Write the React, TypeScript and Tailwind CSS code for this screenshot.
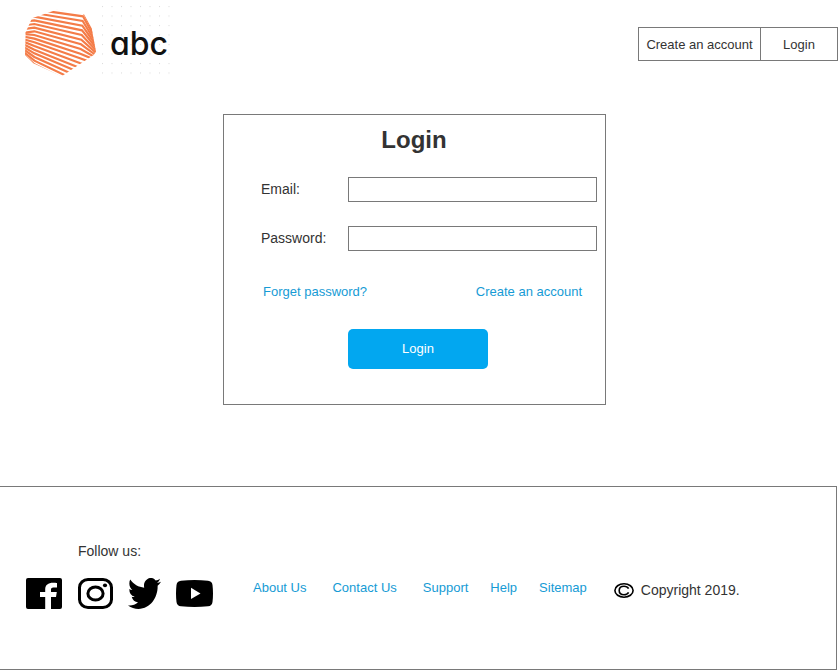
import React from "react";

const stripes = Array.from({ length: 20 }, (_, i) => {
  const a = 2 + i * 11;
  const b = a + 18 + i * 3;
  const c = b + Math.max(18, 84 - i * 7);
  const l = a < 80 ? a + 4 : a - (a - 80) * 0.28;
  return `M28 ${l} L58 ${a} L${205 - i} ${b} L246 ${c}`;
});

function Logo() {
  return (
    <svg width="176" height="86" viewBox="0 0 176 86" role="img" aria-label="abc" className="block shrink-0">
      <defs>
        <clipPath id="gem">
          <path d="M125 14 L207 28 L230 70 L243 140 L236 150 L140 214 L55 175 L30 150 L32 82 L51 40 Z" />
        </clipPath>
        <pattern id="dots" x="102" y="5" width="9.500" height="9.500" patternUnits="userSpaceOnUse">
          <rect x="0" y="1" width="1" height="1" fill="#d9d9d9" />
        </pattern>
      </defs>
      <rect x="102" y="5" width="70" height="77" fill="url(#dots)" />
      <g transform="translate(15 5) scale(0.3333)" clipPath="url(#gem)" fill="none" stroke="#f47c48" strokeWidth="6.500">
        {stripes.map((d) => (
          <path key={d} d={d} />
        ))}
      </g>
      <text x="110" y="55" fill="#111111" className="font-['Inter',sans-serif] text-[32px] font-medium [font-feature-settings:'cv11'_1]">
        abc
      </text>
    </svg>
  );
}

function Field({ id, label, type }: { id: string; label: string; type: string }) {
  return (
    <div className="flex items-center">
      <label htmlFor={id} className="w-[87px] shrink-0 pb-0.5 text-sm">
        {label}
      </label>
      <input id={id} type={type} className="h-[25px] min-w-0 flex-1 border border-[#797979] bg-white px-1 text-sm outline-none" />
    </div>
  );
}

function Social() {
  return (
    <div className="flex items-center">
      <a href="#facebook" aria-label="Facebook">
        <svg width="36" height="31" viewBox="0 0 36 31" className="block">
          <path d="M2 0H34a2 2 0 0 1 2 2V29a2 2 0 0 1-2 2H25V19h5l.8-5H25v-2.500c0-1.300.8-2 2.400-2H31V5C30 4.800 28.800 4.700 27 4.700c-4.800 0-7.800 2.200-7.800 6.500V14H14v5h5.200V31H2a2 2 0 0 1-2-2V2A2 2 0 0 1 2 0Z" />
        </svg>
      </a>
      <a href="#instagram" aria-label="Instagram" className="ml-4">
        <svg width="35" height="31" viewBox="0 0 35 31" className="block" fill="none" stroke="#000">
          <rect x="1.500" y="1.500" width="32" height="28" rx="8.500" ry="8" strokeWidth="3" />
          <ellipse cx="17.500" cy="15.500" rx="7.600" ry="6.600" strokeWidth="3" />
          <ellipse cx="27" cy="7.400" rx="2.100" ry="1.800" fill="#000" stroke="none" />
        </svg>
      </a>
      <a href="#twitter" aria-label="Twitter" className="ml-[15px]">
        <svg width="33" height="31" viewBox="0 2.200 24 19.600" preserveAspectRatio="none" className="block">
          <path d="M23.953 4.570a10 10 0 01-2.825.775 4.958 4.958 0 002.163-2.723c-.951.555-2.005.959-3.127 1.184a4.920 4.920 0 00-8.384 4.482C7.690 8.095 4.067 6.130 1.640 3.162a4.822 4.822 0 00-.666 2.475c0 1.710.870 3.213 2.188 4.096a4.904 4.904 0 01-2.228-.616v.060a4.923 4.923 0 003.946 4.827 4.996 4.996 0 01-2.212.085 4.936 4.936 0 004.604 3.417 9.867 9.867 0 01-6.102 2.105c-.390 0-.779-.023-1.170-.067a13.995 13.995 0 007.557 2.209c9.053 0 13.998-7.496 13.998-13.985 0-.210 0-.420-.015-.630A9.935 9.935 0 0024 4.590z" />
        </svg>
      </a>
      <a href="#youtube" aria-label="YouTube" className="ml-[15px]">
        <svg width="37" height="27" viewBox="0 0 37 27" className="block">
          <path d="M5 .7Q18.500-.7 32 .7Q36 1.100 36.500 5Q37.500 13.500 36.500 22Q36 25.900 32 26.300Q18.500 27.700 5 26.300Q1 25.900.5 22Q-.5 13.500.5 5Q1 1.100 5 .7Z" />
          <path d="M15 7.700V19L24.500 13.400Z" fill="#fff" />
        </svg>
      </a>
    </div>
  );
}

export default function App() {
  return (
    <div className="flex min-h-screen flex-col bg-white font-['Liberation_Sans',Arial,sans-serif] text-[#333333]">
      <header className="flex items-start justify-between">
        <Logo />
        <nav className="mt-[27px] flex h-[34px] border border-[#797979] text-[13px]">
          <button type="button" className="w-[122px] border-r border-[#797979] pt-px">
            Create an account
          </button>
          <button type="button" className="w-[76px] pt-px">
            Login
          </button>
        </nav>
      </header>

      <main className="flex justify-center pt-7 pr-[9px]">
        <form className="w-full max-w-[383px] border border-[#797979] pt-2 pr-2 pb-[35px] pl-[37px]" onSubmit={(e) => e.preventDefault()}>
          <h1 className="pt-px pr-[30px] text-center text-2xl font-bold">Login</h1>
          <div className="mt-[21px] flex flex-col gap-6">
            <Field id="email" label="Email:" type="email" />
            <Field id="password" label="Password:" type="password" />
          </div>
          <div className="mt-[31px] flex justify-between pr-[15px] pl-[2px] text-[13px] leading-5 text-[#169bd5]">
            <a href="#forget">Forget password?</a>
            <a href="#create">Create an account</a>
          </div>
          <button type="submit" className="mt-[27px] ml-[87px] block h-10 w-[140px] rounded-[5px] bg-[#02a7f0] text-[13px] text-white">
            Login
          </button>
        </form>
      </main>

      <footer className="mt-[81px] mr-px flex grow items-start border-y border-r border-[#797979] pl-[26px]">
        <div className="pt-[54px]">
          <p className="mb-[17px] pl-[52px] text-sm">Follow us:</p>
          <Social />
        </div>
        <nav className="ml-10 flex gap-[26px] pt-[91px] text-[13px] leading-5 whitespace-nowrap text-[#169bd5]">
          <a href="#about">About Us</a>
          <a href="#contact">Contact Us</a>
          <div className="flex gap-[22px]">
            <a href="#support">Support</a>
            <a href="#help">Help</a>
            <a href="#sitemap">Sitemap</a>
          </div>
        </nav>
        <div className="ml-[27px] flex items-center gap-[7px] pt-[93px] text-sm whitespace-nowrap">
          <svg width="20" height="15" viewBox="0 0 20 15" fill="none" stroke="#000" strokeWidth="1.600" aria-hidden="true">
            <ellipse cx="10" cy="7.500" rx="9.100" ry="6.700" />
            <path d="M14.600 5.700C13.400 3.600 11.500 3.300 10 3.300C7.200 3.300 5.200 5 5.200 7.500S7.200 11.700 10 11.700C11.500 11.700 13.400 11.400 14.600 9.300" />
          </svg>
          <span>Copyright 2019.</span>
        </div>
      </footer>
    </div>
  );
}
